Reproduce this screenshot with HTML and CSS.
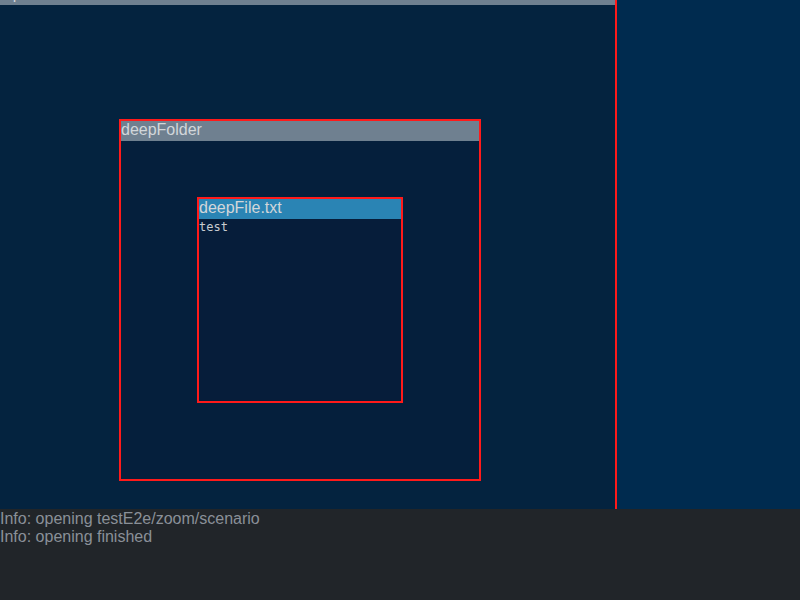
FILE: index.html
```html
<!DOCTYPE html>
<html>
<head>
<meta charset="utf-8">
<link rel="stylesheet" href="styles.css">
</head>
<body>
<div class="app">
  <div class="canvas">
    <div class="box box-root">
      <div class="box-head head-gray"><span class="root-title">deep</span></div>
      <div class="box box-folder">
        <div class="box-head head-gray">deepFolder</div>
        <div class="box box-file">
          <div class="box-head head-blue">deepFile.txt</div>
          <div class="file-body">test</div>
        </div>
      </div>
    </div>
  </div>
  <div class="log">
    <div class="log-line">Info: opening testE2e/zoom/scenario</div>
    <div class="log-line">Info: opening finished</div>
  </div>
</div>
</body>
</html>
```
FILE: styles.css
```css
html, body {
  margin: 0;
  padding: 0;
  width: 800px;
  height: 600px;
  overflow: hidden;
  font-family: "Liberation Sans", Arial, sans-serif;
}
.app {
  display: flex;
  flex-direction: column;
  width: 800px;
  height: 600px;
}
.canvas {
  position: relative;
  height: 509px;
  flex: none;
  overflow: hidden;
  background: #002b4f;
}
.box {
  position: absolute;
  box-sizing: border-box;
  border: 2px solid #ff1a1a;
}
.box-root {
  left: -18px;
  top: -17px;
  width: 635px;
  height: 620px;
  background: #04233f;
}
.box-folder {
  left: 135px;
  top: 134px;
  width: 362px;
  height: 362px;
  background: #051f3c;
}
.box-file {
  left: 76px;
  top: 76px;
  width: 206px;
  height: 206px;
  background: #061d3a;
}
.box-head {
  height: 20px;
  line-height: 17px;
  font-size: 16px;
  color: #d2d6da;
  padding-left: 0;
  white-space: nowrap;
  overflow: hidden;
}
.head-gray {
  background: #6f8090;
}
.head-blue {
  background: #2a84b4;
}
.root-title {
  margin-left: 2px;
}
.file-body {
  font-family: "DejaVu Sans Mono", "Liberation Mono", monospace;
  font-size: 12px;
  color: #c8ccd0;
  line-height: 16px;
  padding-top: 0;
}
.log {
  flex: 1;
  background: #212529;
  padding-top: 1px;
}
.log-line {
  font-size: 16px;
  line-height: 18px;
  color: #8a9098;
}
```
